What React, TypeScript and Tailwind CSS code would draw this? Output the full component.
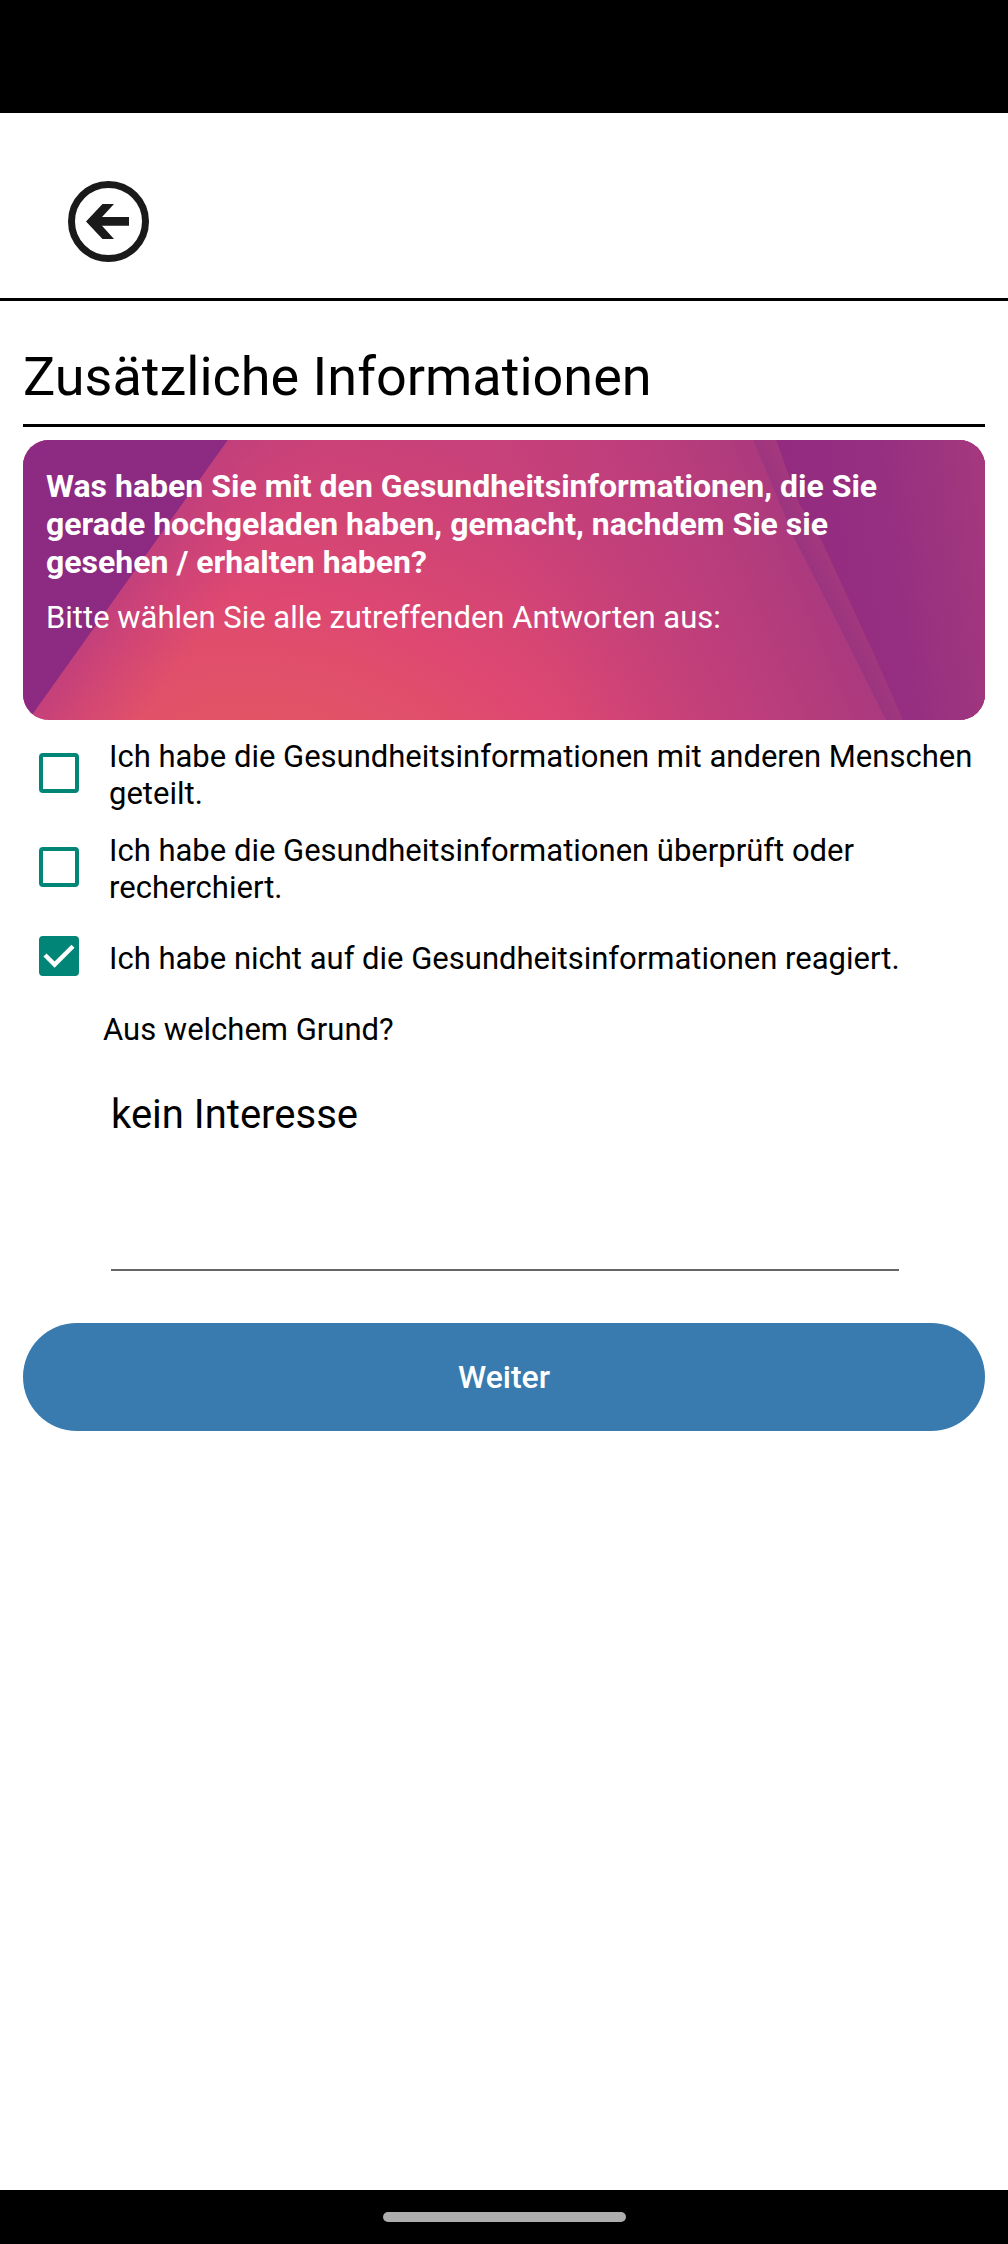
import { useState } from "react";

function BackIcon() {
  return (
    <svg viewBox="0 0 81 81" className="size-[81px]" fill="none" aria-hidden="true">
      <circle cx="40.5" cy="40.5" r="37" stroke="#1a1a1a" strokeWidth="7" />
      <path
        d="M18 40.4 34.5 23H46L34 36H61V44.8H34L46 58H34.5Z"
        fill="#1a1a1a"
      />
    </svg>
  );
}

function CardArtwork() {
  return (
    <svg
      viewBox="0 0 963 280"
      preserveAspectRatio="none"
      className="absolute inset-0 size-full"
      aria-hidden="true"
    >
      <defs>
        <radialGradient
          id="glow"
          gradientUnits="userSpaceOnUse"
          cx="0"
          cy="0"
          r="1"
          gradientTransform="translate(255 350) rotate(12) scale(600 375)"
        >
          <stop offset="0" stopColor="#e35565" />
          <stop offset="0.22" stopColor="#e25367" />
          <stop offset="0.36" stopColor="#e04e6b" />
          <stop offset="0.5" stopColor="#de4871" />
          <stop offset="0.75" stopColor="#d24475" />
          <stop offset="0.92" stopColor="#cb4278" />
          <stop offset="1" stopColor="#c9417a" />
        </radialGradient>
        <linearGradient
          id="shade"
          gradientUnits="userSpaceOnUse"
          x1="500"
          y1="170"
          x2="800"
          y2="40"
        >
          <stop offset="0" stopColor="#c03e7b" stopOpacity="0" />
          <stop offset="0.55" stopColor="#b93d7c" stopOpacity="0.85" />
          <stop offset="0.9" stopColor="#a9397e" />
          <stop offset="1" stopColor="#a5377e" />
        </linearGradient>
        <linearGradient
          id="fold"
          gradientUnits="userSpaceOnUse"
          x1="107"
          y1="137"
          x2="182"
          y2="191"
        >
          <stop offset="0" stopColor="#c03f7c" stopOpacity="0.9" />
          <stop offset="1" stopColor="#c9417a" stopOpacity="0" />
        </linearGradient>
        <linearGradient id="left" x1="0" y1="0" x2="1" y2="1">
          <stop offset="0" stopColor="#8d2a83" />
          <stop offset="1" stopColor="#8c2b80" />
        </linearGradient>
        <linearGradient
          id="right"
          gradientUnits="userSpaceOnUse"
          x1="780"
          y1="120"
          x2="963"
          y2="95"
        >
          <stop offset="0" stopColor="#932c80" />
          <stop offset="0.45" stopColor="#962e81" />
          <stop offset="0.7" stopColor="#9b3380" />
          <stop offset="1" stopColor="#a4377e" />
        </linearGradient>
        <linearGradient
          id="band"
          gradientUnits="userSpaceOnUse"
          x1="780"
          y1="112"
          x2="802"
          y2="101"
        >
          <stop offset="0" stopColor="#9b347f" />
          <stop offset="1" stopColor="#a4387d" />
        </linearGradient>
      </defs>
      <rect width="963" height="280" fill="url(#glow)" />
      <rect width="963" height="280" fill="url(#shade)" />
      <rect width="963" height="280" fill="url(#fold)" />
      <path d="M0 0H205L9 275 0 280Z" fill="url(#left)" />
      <path d="M731 0H963V280H864L810 172 773 100Z" fill="url(#band)" />
      <path d="M754 0H963V280H881L850 210 800 102 776 62Z" fill="url(#right)" />
    </svg>
  );
}

interface OptionProps {
  label: string;
  checked: boolean;
  tall?: boolean;
  onToggle: () => void;
}

function Option({ label, checked, tall, onToggle }: OptionProps) {
  return (
    <label
      className={`flex items-center gap-[30px] pl-4 ${tall ? "min-h-[94px]" : "min-h-[84px]"}`}
    >
      <span className="relative size-10 shrink-0">
        <input
          type="checkbox"
          checked={checked}
          onChange={onToggle}
          className="block size-10 appearance-none rounded-[4px] border-4 border-[#008577] bg-white checked:bg-[#008577]"
        />
        {checked && (
          <svg
            viewBox="0 0 40 40"
            className="pointer-events-none absolute inset-0 size-10"
            fill="none"
            aria-hidden="true"
          >
            <path d="M6 19 15.6 28.6 34 10.3" stroke="#fff" strokeWidth="4.4" />
          </svg>
        )}
      </span>
      <span className="pt-1 text-[31px] leading-[37px]">{label}</span>
    </label>
  );
}

const OPTIONS = [
  { label: "Ich habe die Gesundheitsinformationen mit anderen Menschen geteilt.", tall: true },
  { label: "Ich habe die Gesundheitsinformationen überprüft oder recherchiert.", tall: true },
  { label: "Ich habe nicht auf die Gesundheitsinformationen reagiert.", tall: false },
];

export default function App() {
  const [selected, setSelected] = useState([false, false, true]);
  const [reason, setReason] = useState("kein Interesse");

  const toggle = (index: number) =>
    setSelected((prev) => prev.map((value, i) => (i === index ? !value : value)));

  return (
    <div className="flex min-h-screen flex-col bg-white font-[Roboto,sans-serif] text-black">
      <div className="h-[113px] bg-black" />
      <header className="flex border-b-[3px] border-black px-[68px] pt-[68px] pb-9">
        <button type="button" aria-label="Zurück" className="rounded-full">
          <BackIcon />
        </button>
      </header>

      <main className="flex grow flex-col px-[23px] pt-11">
        <h1 className="border-b-[3px] border-black pb-[15px] text-[54px] leading-[64px]">
          Zusätzliche Informationen
        </h1>

        <section className="relative mt-[13px] min-h-[280px] overflow-hidden rounded-[26px] leading-[38px] text-white">
          <CardArtwork />
          <div className="relative flex flex-col gap-[18px] pt-[27px] pr-12 pb-8 pl-[23px]">
            <h2 className="text-[32px] leading-[38px] font-bold">
              Was haben Sie mit den Gesundheitsinformationen, die Sie gerade hochgeladen
              haben, gemacht, nachdem Sie sie gesehen / erhalten haben?
            </h2>
            <p className="text-[31px] leading-[38px]">
              Bitte wählen Sie alle zutreffenden Antworten aus:
            </p>
          </div>
        </section>

        <div className="mt-[6px] flex flex-col">
          {OPTIONS.map((option, index) => (
            <Option
              key={option.label}
              label={option.label}
              tall={option.tall}
              checked={selected[index]}
              onToggle={() => toggle(index)}
            />
          ))}
        </div>

        <label htmlFor="reason" className="mt-[13px] ml-20 text-[31px] leading-[37px]">
          Aus welchem Grund?
        </label>
        <textarea
          id="reason"
          value={reason}
          onChange={(event) => setReason(event.target.value)}
          className="mt-[43px] mr-[86px] ml-[88px] h-[180px] resize-none border-b-2 border-[#666] text-[40px] leading-[47px] outline-none"
        />

        <button
          type="button"
          className="mt-[52px] h-[108px] rounded-full bg-[#397baf] text-[32px] font-medium text-white"
        >
          Weiter
        </button>
      </main>

      <footer className="flex h-[54px] items-center justify-center bg-black">
        <div className="h-[10px] w-[243px] rounded-full bg-[#aeaeae]" />
      </footer>
    </div>
  );
}
